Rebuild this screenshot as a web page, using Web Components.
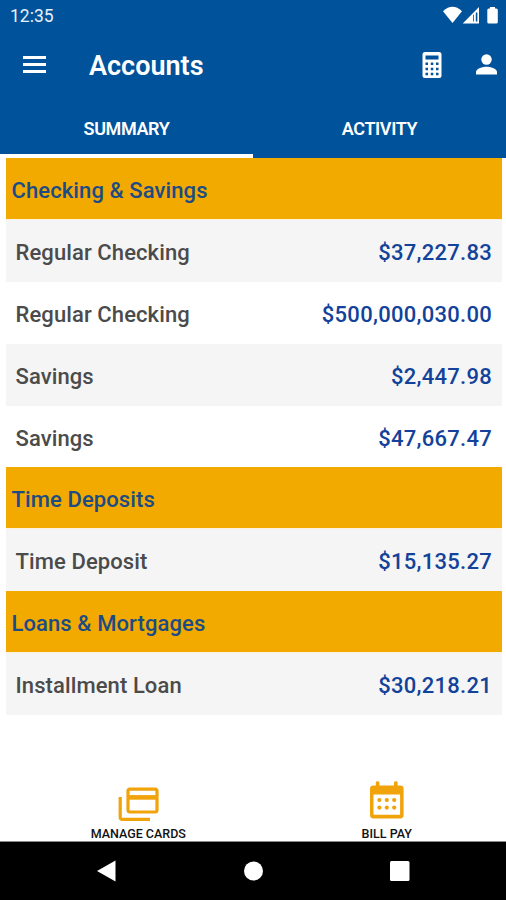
<!DOCTYPE html>
<html lang="en">
<head>
<meta charset="utf-8">
<title>Accounts</title>
<style>
    body {
        margin: 0;
        background: #fff;
        font-family: Roboto, "Liberation Sans", sans-serif;
    }
</style>
</head>
<body>
<bank-app>
    <status-bar slot="top">12:35</status-bar>
    <app-toolbar slot="top">Accounts</app-toolbar>
    <tab-bar slot="top">
        <tab-item active>SUMMARY</tab-item>
        <tab-item>ACTIVITY</tab-item>
    </tab-bar>

    <account-group name="Checking &amp; Savings">
        <account-row shaded amount="$37,227.83">Regular Checking</account-row>
        <account-row amount="$500,000,030.00">Regular Checking</account-row>
        <account-row shaded amount="$2,447.98">Savings</account-row>
        <account-row amount="$47,667.47">Savings</account-row>
    </account-group>
    <account-group name="Time Deposits">
        <account-row shaded amount="$15,135.27">Time Deposit</account-row>
    </account-group>
    <account-group name="Loans &amp; Mortgages">
        <account-row shaded amount="$30,218.21">Installment Loan</account-row>
    </account-group>

    <quick-action slot="actions">
        <svg slot="icon" width="42" height="40" viewBox="0 0 42 40" fill="none" stroke="#f0a30a" stroke-width="3.2">
            <rect x="11" y="8.2" width="29" height="22.8" rx="2"/>
            <path d="M11 16.400h29" stroke-width="4.6"/>
            <path d="M3.200 16v20.400a2 2 0 0 0 2 2H33"/>
        </svg>
        MANAGE CARDS
    </quick-action>
    <quick-action slot="actions">
        <svg slot="icon" width="42" height="40" viewBox="0 0 42 40" fill="#f0a30a">
            <path fill-rule="evenodd" d="M9.800 1.500q0-1.200 1.800-1.200t1.800 1.200V4.500H28V1.500q0-1.200 1.800-1.200t1.800 1.200v3h2.600a3.400 3.400 0 0 1 3.400 3.400v26.200a3.400 3.400 0 0 1-3.400 3.400H7.400A3.400 3.400 0 0 1 4 34.100V7.900a3.400 3.400 0 0 1 3.400-3.400h2.400zM7.500 13.600v20.200h26.600V13.600z"/>
            <circle cx="13.400" cy="19" r="2.100"/>
            <circle cx="20.800" cy="19" r="2.100"/>
            <circle cx="28.200" cy="19" r="2.100"/>
            <circle cx="13.400" cy="26.600" r="2.100"/>
            <circle cx="20.800" cy="26.600" r="2.100"/>
            <circle cx="28.200" cy="26.600" r="2.100"/>
        </svg>
        BILL PAY
    </quick-action>

    <system-nav slot="bottom"></system-nav>
</bank-app>

<script>
class BankApp extends HTMLElement {
    constructor() {
        super();
        this.attachShadow({ mode: 'open' });
    }

    connectedCallback() {
        this.shadowRoot.innerHTML = `
        <style>
            :host {
                display: flex;
                flex-direction: column;
                height: 900px;
                overflow: hidden;
            }
            header {
                flex: none;
                height: 158px;
                background: #00529b;
                color: #fff;
            }
            main {
                flex: 1;
                padding: 0 4px 0 6px;
            }
            .actions {
                display: flex;
                height: 61px;
                padding: 0 0 0 14px;
                border-bottom: 1px solid #8a8a8a;
            }
        </style>
        <header><slot name="top"></slot></header>
        <main><slot></slot></main>
        <div class="actions"><slot name="actions"></slot></div>
        <slot name="bottom"></slot>
        `;
    }
}
customElements.define('bank-app', BankApp);

class StatusBar extends HTMLElement {
    constructor() {
        super();
        this.attachShadow({ mode: 'open' });
    }

    connectedCallback() {
        this.shadowRoot.innerHTML = `
        <style>
            :host {
                display: flex;
                justify-content: space-between;
                height: 32px;
                padding: 0 7px 0 10px;
                font-size: 17.5px;
                line-height: 33px;
                color: #e8f0fa;
            }
            svg { display: block; }
        </style>
        <span><slot></slot></span>
        <svg width="58" height="32" viewBox="441 0 58 32" fill="#fff">
            <path d="M443 11.200Q452.500 2.500 462 11.200L452.500 23z"/>
            <path fill-rule="evenodd" d="M479 7v16.500h-16.300zM477.400 12.500h-1.600v9h1.600zM474 14.200v7.300h-.8v-6.400z"/>
            <path d="M490 7h5v1.500h1.300q1.500 0 1.500 1.500v12q0 1.500-1.500 1.500h-7.500q-1.500 0-1.500-1.500V10q0-1.500 1.500-1.500h1.200z"/>
        </svg>
        `;
    }
}
customElements.define('status-bar', StatusBar);

class AppToolbar extends HTMLElement {
    constructor() {
        super();
        this.attachShadow({ mode: 'open' });
    }

    connectedCallback() {
        this.shadowRoot.innerHTML = `
        <style>
            :host {
                display: flex;
                align-items: center;
                height: 66px;
                padding: 0 9px 0 23px;
            }
            h1 {
                flex: 1;
                margin: 2px 0 0 43px;
                font-size: 27px;
                font-weight: 600;
                line-height: 32px;
            }
            svg { display: block; flex: none; }
            .calc { margin-right: 34px; }
        </style>
        <svg width="23" height="18" viewBox="0 0 23 18" fill="#fff">
            <path d="M0 0h23v3H0zM0 7h23v3H0zM0 14h23v3H0z"/>
        </svg>
        <h1><slot></slot></h1>
        <svg class="calc" width="20" height="26" viewBox="0 0 20 26">
            <rect x=".5" width="19" height="26" rx="2.500" fill="#fff"/>
            <path fill="#00529b" d="M3.500 3.500h13v4h-13zM3.500 10.500H6V13H3.500zM8.800 10.500h2.500V13H8.800zM14 10.500h2.500V13H14zM3.500 15.700H6v2.500H3.500zM8.800 15.700h2.500v2.500H8.800zM14 15.700h2.500v2.500H14zM3.500 20.800H6v2.500H3.500zM8.800 20.800h2.500v2.500H8.800zM14 20.800h2.500v2.500H14z"/>
        </svg>
        <svg width="21" height="22" viewBox="0 0 21 22" fill="#fff">
            <circle cx="10.500" cy="5.500" r="5.200"/>
            <path d="M0 20.500V18c0-3.500 7-5.300 10.500-5.300S21 14.500 21 18v2.500z"/>
        </svg>
        `;
    }
}
customElements.define('app-toolbar', AppToolbar);

class TabBar extends HTMLElement {
    constructor() {
        super();
        this.attachShadow({ mode: 'open' });
    }

    connectedCallback() {
        this.shadowRoot.innerHTML = `
        <style>
            :host {
                display: grid;
                grid-template-columns: 1fr 1fr;
                height: 60px;
            }
        </style>
        <slot></slot>
        `;
    }
}
customElements.define('tab-bar', TabBar);

class TabItem extends HTMLElement {
    constructor() {
        super();
        this.attachShadow({ mode: 'open' });
    }

    connectedCallback() {
        this.shadowRoot.innerHTML = `
        <style>
            :host {
                box-sizing: border-box;
                height: 60px;
                border-bottom: 4px solid transparent;
                font-size: 18px;
                font-weight: 600;
                letter-spacing: -.4px;
                line-height: 62px;
                text-align: center;
            }
            :host([active]) { border-color: #fff; }
        </style>
        <slot></slot>
        `;
    }
}
customElements.define('tab-item', TabItem);

class AccountGroup extends HTMLElement {
    constructor() {
        super();
        this.attachShadow({ mode: 'open' });
    }

    connectedCallback() {
        this.shadowRoot.innerHTML = `
        <style>
            :host { display: block; }
            h2 {
                box-sizing: border-box;
                height: 61.9px;
                margin: 0;
                padding-left: 5.5px;
                border-bottom: 1px solid #fdf3dc;
                background: #f3aa00;
                color: #1c4b85;
                font-size: 22px;
                font-weight: 500;
                letter-spacing: .1px;
                line-height: 65px;
            }
        </style>
        <h2></h2>
        <slot></slot>
        `;
        this.shadowRoot.querySelector('h2').textContent = this.getAttribute('name');
    }
}
customElements.define('account-group', AccountGroup);

class AccountRow extends HTMLElement {
    constructor() {
        super();
        this.attachShadow({ mode: 'open' });
    }

    connectedCallback() {
        this.shadowRoot.innerHTML = `
        <style>
            :host {
                display: flex;
                justify-content: space-between;
                box-sizing: border-box;
                height: 61.9px;
                padding: 0 10px 0 9.5px;
                color: #4b4b4b;
                font-size: 22px;
                font-weight: 500;
                letter-spacing: .1px;
                line-height: 66px;
            }
            :host([shaded]) { background: #f5f5f5; }
            .amount {
                color: #12429a;
                letter-spacing: .28px;
            }
        </style>
        <span><slot></slot></span>
        <span class="amount"></span>
        `;
        this.shadowRoot.querySelector('.amount').textContent = this.getAttribute('amount');
    }
}
customElements.define('account-row', AccountRow);

class QuickAction extends HTMLElement {
    constructor() {
        super();
        this.attachShadow({ mode: 'open' });
    }

    connectedCallback() {
        this.shadowRoot.innerHTML = `
        <style>
            :host {
                flex: none;
                display: flex;
                flex-direction: column;
                align-items: center;
                width: 248.5px;
                padding-top: 1px;
                color: #111;
                font-size: 12.5px;
                font-weight: 500;
                line-height: 14px;
            }
            .label { margin-top: 6px; }
        </style>
        <slot name="icon"></slot>
        <span class="label"><slot></slot></span>
        `;
    }
}
customElements.define('quick-action', QuickAction);

class SystemNav extends HTMLElement {
    constructor() {
        super();
        this.attachShadow({ mode: 'open' });
    }

    connectedCallback() {
        this.shadowRoot.innerHTML = `
        <style>
            :host {
                flex: none;
                display: flex;
                justify-content: space-between;
                align-items: center;
                height: 58px;
                padding: 0 96.5px;
                background: #000;
            }
        </style>
        <svg width="20" height="22" viewBox="0 0 20 22" fill="#fff"><path d="M0 11 18.500 .5v21z"/></svg>
        <svg width="20" height="20" viewBox="0 0 20 20" fill="#fff"><circle cx="10.500" cy="10" r="9.500"/></svg>
        <svg width="20" height="20" viewBox="0 0 20 20" fill="#fff"><rect width="19.500" height="20" rx="1.500"/></svg>
        `;
    }
}
customElements.define('system-nav', SystemNav);
</script>
</body>
</html>
